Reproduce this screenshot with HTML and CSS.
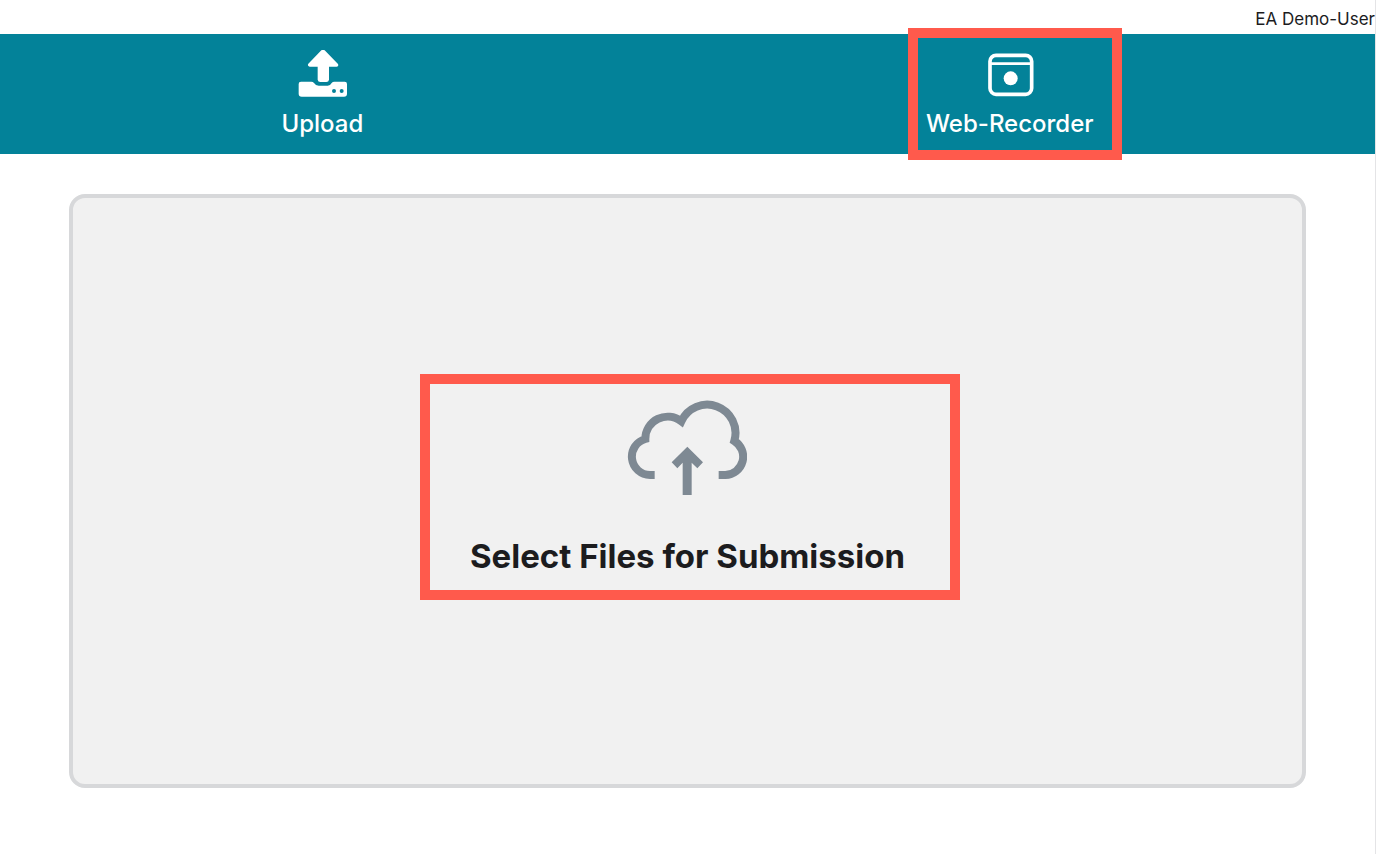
FILE: index.html
```html
<!DOCTYPE html>
<html lang="en">
<head>
  <meta charset="utf-8">
  <meta name="viewport" content="width=device-width, initial-scale=1">
  <title>Submission</title>
  <link rel="stylesheet" href="styles.css">
</head>
<body>
  <div class="page">
    <header class="user-bar">EA Demo-User</header>
    <nav class="tabs">
      <button class="tab" type="button">
        <svg class="tab-icon" viewBox="84 60 150 144" aria-hidden="true">
          <path fill="currentColor" d="M157 61q5-4 10 0l40 41q3 7-4 8h-23v39q-1 7-8 7h-18q-7 0-8-7v-39h-24q-8-2-4-9z"/>
          <path fill="currentColor" fill-rule="evenodd" d="M96 155h31q5 0 8 4 5 8 14 8h27q8 0 12-8 3-4 8-4h31q7 0 7 7v29q0 9-9 9H98q-9 0-9-9v-29q0-7 7-7zM195 177a6 6 0 1 0 0 12 6 6 0 0 0 0-12zM218 177a6 6 0 1 0 0 12 6 6 0 0 0 0-12z"/>
        </svg>
        <span class="tab-label">Upload</span>
      </button>
      <button class="tab tab-marked" type="button">
        <svg class="tab-icon" viewBox="256 90 150 144" aria-hidden="true">
          <rect x="271" y="106" width="125" height="117" rx="18" fill="none" stroke="currentColor" stroke-width="11"/>
          <path d="M271 131h125" stroke="currentColor" stroke-width="8"/>
          <circle cx="333" cy="175" r="21" fill="currentColor"/>
        </svg>
        <span class="tab-label">Web-Recorder</span>
      </button>
    </nav>
    <main class="content">
      <section class="drop-zone">
        <button class="select-files" type="button">
          <svg class="cloud-icon" viewBox="52 60 360 288" aria-hidden="true">
            <path fill="none" stroke="currentColor" stroke-width="24" d="M135 285H121A55 55 0 0 1 107 177A67 67 0 0 1 215 124A85 85 0 0 1 374 183A55 55 0 0 1 347 285H327"/>
            <path fill="currentColor" d="M233 200l47 47-17 18-17-17v97h-27v-97l-16 17-17-18z"/>
          </svg>
          <span>Select Files for Submission</span>
        </button>
      </section>
    </main>
  </div>
</body>
</html>
```
FILE: styles.css
```css
* {
  box-sizing: border-box;
}

body {
  margin: 0;
  background: #fff;
  color: #1c1c1e;
  font-family: Inter, "Liberation Sans", sans-serif;
}

button {
  padding: 0;
  border: 0;
  background: none;
  color: inherit;
  font: inherit;
  cursor: pointer;
}

.page {
  display: flex;
  flex-direction: column;
  min-height: 100vh;
  border-right: 1px solid #e4e4e6;
}

.user-bar {
  padding: 6px 0 2px;
  font-size: 17px;
  line-height: 26px;
  text-align: right;
}

.tabs {
  display: flex;
  justify-content: space-around;
  background: #038299;
  color: #fff;
}

.tab {
  position: relative;
  display: flex;
  flex-direction: column;
  align-items: center;
  gap: 11px;
  padding: 16px 0 15px;
}

.tab-icon {
  width: 50px;
  height: 48px;
}

.tab-label {
  font-size: 24px;
  font-weight: 500;
  line-height: 30px;
}

.tab-marked::after,
.select-files::after {
  content: "";
  position: absolute;
  border: 10px solid #ff5a4c;
  pointer-events: none;
}

.tab-marked::after {
  inset: -6px -28px -6px -18px;
}

.content {
  display: flex;
  flex: 1;
  padding: 40px 5% 66px;
}

.drop-zone {
  display: flex;
  flex: 1;
  align-items: center;
  justify-content: center;
  border: 4px solid #d7d8da;
  border-radius: 16px;
  background: #f1f1f1;
}

.select-files {
  position: relative;
  display: flex;
  flex-direction: column;
  align-items: center;
  gap: 40px;
  padding-bottom: 6px;
  font-size: 33px;
  font-weight: 700;
  line-height: 40px;
}

.select-files::after {
  inset: -26px -55px -18px -50px;
}

.cloud-icon {
  width: 120px;
  height: 96px;
  color: #7e8993;
}
```
